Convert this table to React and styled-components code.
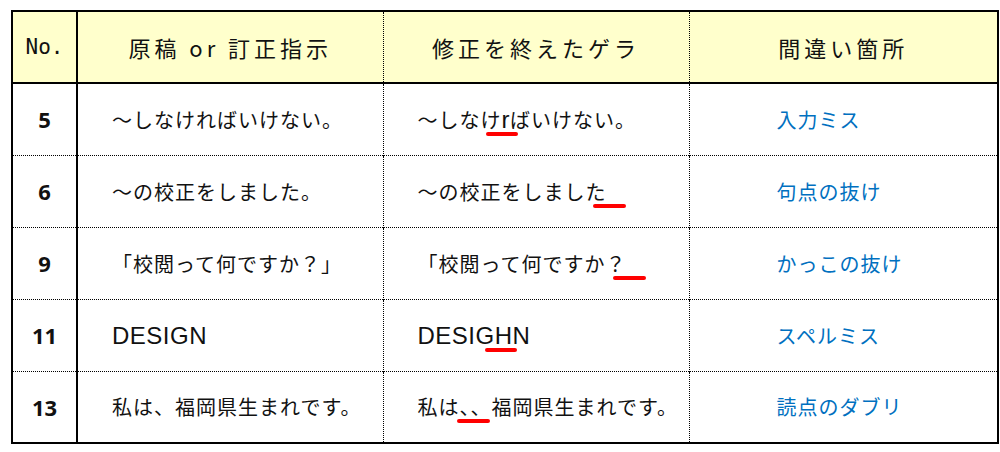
import React from "react";
import styled, { createGlobalStyle } from "styled-components";

const rows = [
  {
    no: "5",
    original: "～しなければいけない。",
    fixed: ["～しなけ", { mark: "r", left: -16, width: 32 }, "ばいけない。"],
    place: "入力ミス",
  },
  {
    no: "6",
    original: "～の校正をしました。",
    fixed: ["～の校正をしました", { mark: "\u3000", left: -14, width: 33 }],
    place: "句点の抜け",
  },
  {
    no: "9",
    original: "「校閲って何ですか？」",
    fixed: ["「校閲って何ですか", { mark: "？", left: 7, width: 33 }],
    place: "かっこの抜け",
  },
  {
    no: "11",
    original: "DESIGN",
    fixed: ["DESIG", { mark: "H", left: -10, width: 32 }, "N"],
    place: "スペルミス",
  },
  {
    no: "13",
    original: "私は、福岡県生まれです。",
    fixed: ["私は", { mark: "、、", left: -3, width: 33 }, "福岡県生まれです。"],
    place: "読点のダブリ",
  },
];

// latin runs are set in a wider face, like the sheet's own font
const withLatin = (text) =>
  text.split(/([A-Za-z]+)/).map((chunk, i) =>
    /^[A-Za-z]+$/.test(chunk) ? <Latin key={i}>{chunk}</Latin> : chunk
  );

const App = () => {
  return (
    <>
      <GlobalStyle />
      <Sheet>
        <colgroup>
          <col style={{ width: 65 }} />
          <col style={{ width: 306 }} />
          <col style={{ width: 306 }} />
          <col style={{ width: 309 }} />
        </colgroup>
        <thead>
          <tr>
            <HeadCell $mono>No.</HeadCell>
            <HeadCell>原稿 or 訂正指示</HeadCell>
            <HeadCell>修正を終えたゲラ</HeadCell>
            <HeadCell>間違い箇所</HeadCell>
          </tr>
        </thead>
        <tbody>
          {rows.map((row) => (
            <Row key={row.no}>
              <NoCell>{row.no}</NoCell>
              <TextCell>{withLatin(row.original)}</TextCell>
              <TextCell>
                {row.fixed.map((part, i) =>
                  typeof part === "string" ? (
                    <React.Fragment key={i}>{withLatin(part)}</React.Fragment>
                  ) : (
                    <Mark key={i} $left={part.left} $width={part.width}>
                      {withLatin(part.mark)}
                    </Mark>
                  )
                )}
              </TextCell>
              <PlaceCell>{row.place}</PlaceCell>
            </Row>
          ))}
        </tbody>
      </Sheet>
    </>
  );
};

export default App;

const GlobalStyle = createGlobalStyle`
  body {
    margin: 0;
    background: #ffffff;
    font-family: "Noto Sans CJK JP", "Noto Sans", sans-serif;
  }
`;

const Sheet = styled.table`
  margin: 10px 0 0 11px;
  width: 986px;
  table-layout: fixed;
  border-collapse: collapse;
  border: 2px solid #000;
  color: #111;
`;

const HeadCell = styled.th`
  height: 70px;
  padding: 0;
  background: #ffffcc;
  border-bottom: 2px solid #000;
  border-left: 1px dotted #000;
  font-weight: 400;
  font-size: ${({ $mono }) => ($mono ? "21px" : "22px")};
  letter-spacing: ${({ $mono }) => ($mono ? "0" : "4px")};
  font-family: ${({ $mono }) =>
    $mono
      ? '"DejaVu Sans Mono", "Liberation Mono", monospace'
      : '"Noto Sans CJK JP", sans-serif'};
  text-align: center;

  &:first-child {
    border-left: none;
    border-right: 2px solid #000;
  }
`;

const Row = styled.tr`
  height: 72px;
  border-top: 1px dotted #000;

  &:first-child {
    border-top: none;
  }
`;

const Cell = styled.td`
  padding: 0;
  border-left: 1px dotted #000;
  font-size: 20px;
  white-space: nowrap;
`;

const NoCell = styled(Cell)`
  border-left: none;
  border-right: 2px solid #000;
  text-align: center;
  font-size: 22px;
  font-weight: 700;
  font-family: "Noto Sans", "Noto Sans CJK JP", sans-serif;
`;

const TextCell = styled(Cell)`
  padding-left: 34px;
  letter-spacing: 1px;
`;

const PlaceCell = styled(Cell)`
  padding-left: 87px;
  color: #0070c0;
  letter-spacing: 1px;
`;

const Latin = styled.span`
  font-family: "Liberation Sans", Arial, sans-serif;
  font-size: 24px;
  letter-spacing: 0.5px;
`;

const Mark = styled.span`
  position: relative;

  &::after {
    content: "";
    position: absolute;
    left: ${({ $left }) => $left}px;
    width: ${({ $width }) => $width}px;
    bottom: -2px;
    height: 4px;
    border-radius: 2px;
    background: #ff0000;
  }
`;
